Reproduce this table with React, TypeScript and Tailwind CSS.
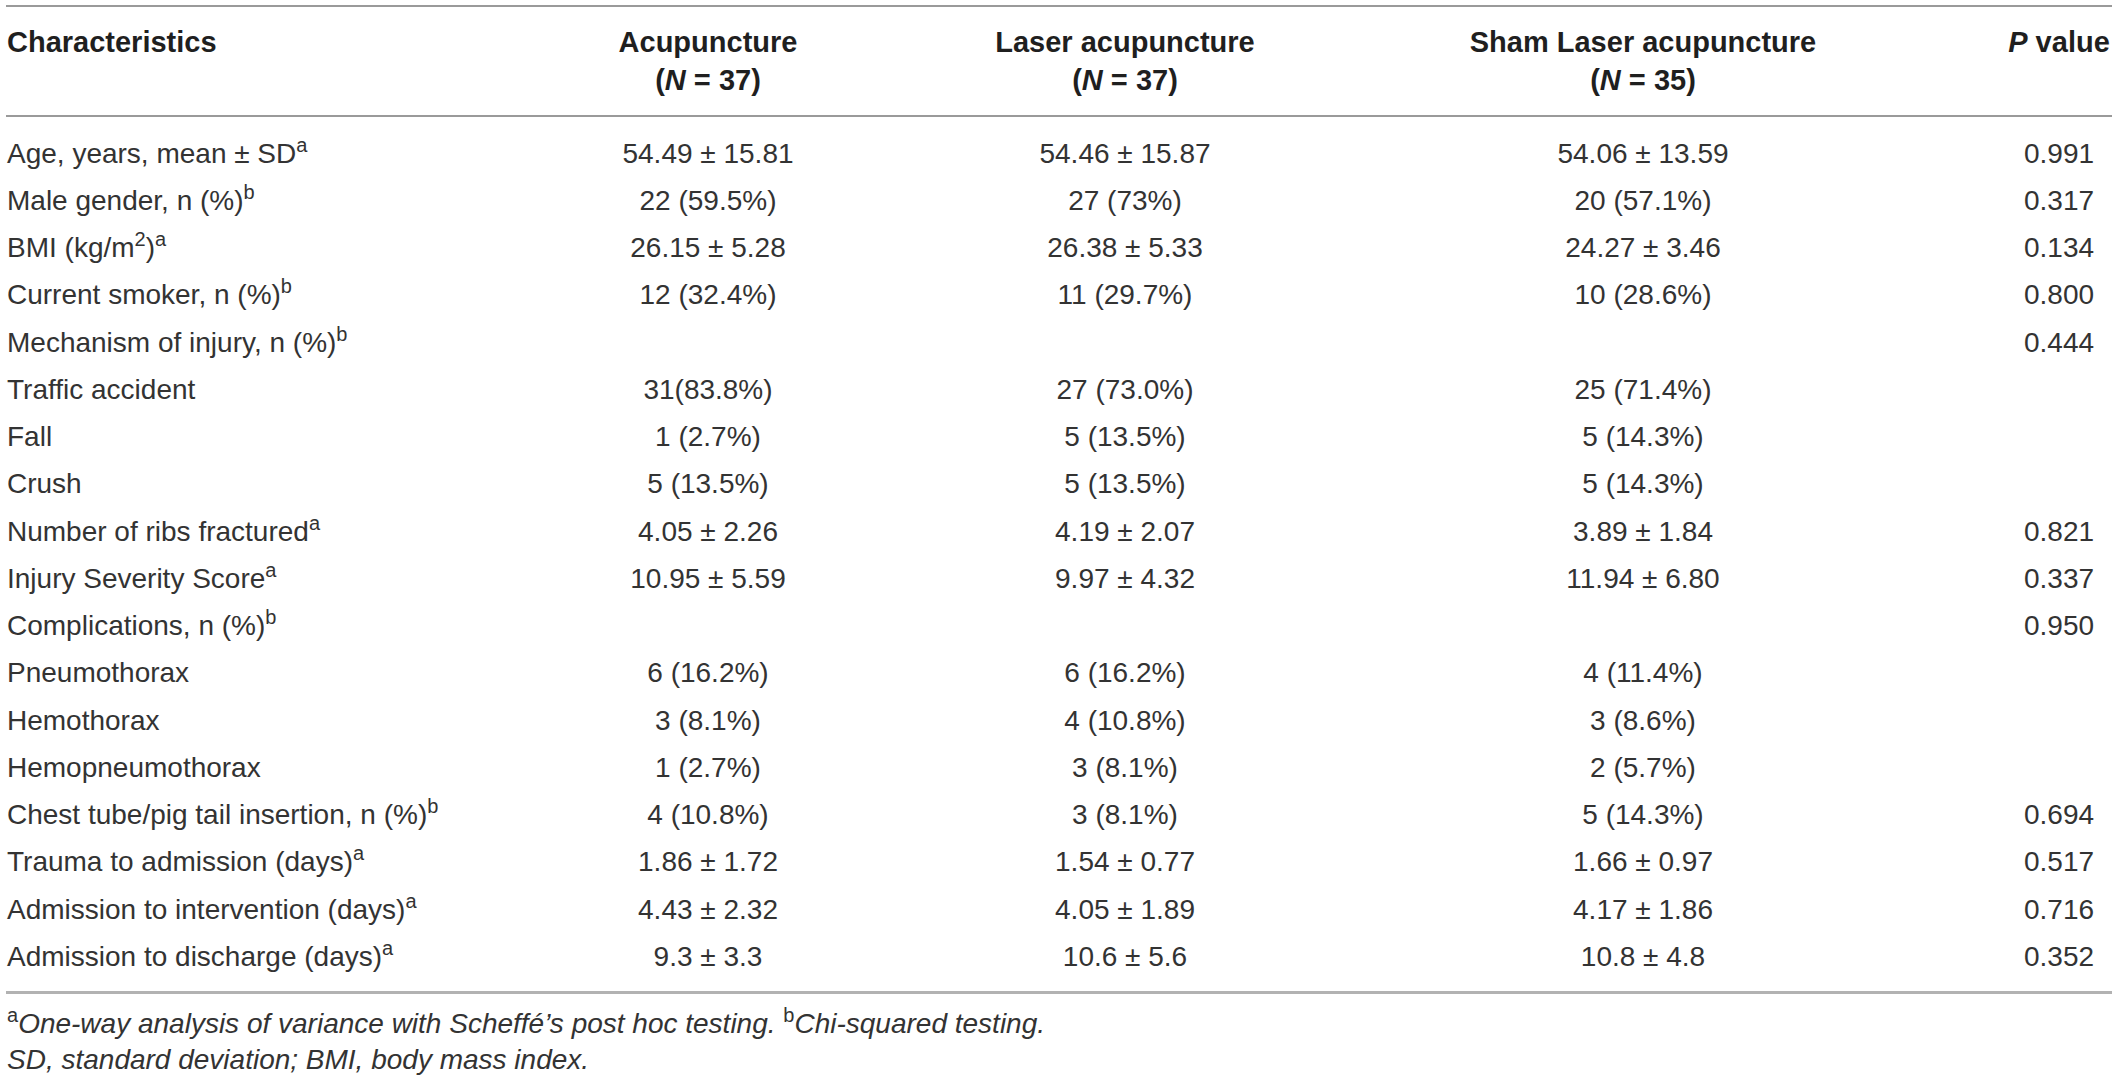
import type { ReactNode } from "react";

type Row = {
  label: ReactNode;
  values: [string, string, string];
  p: string;
};

const Sup = ({ children }: { children: ReactNode }) => (
  <sup className="text-[20px] top-[-0.55em]">{children}</sup>
);

const rows: Row[] = [
  { label: <>Age, years, mean ± SD<Sup>a</Sup></>, values: ["54.49 ± 15.81", "54.46 ± 15.87", "54.06 ± 13.59"], p: "0.991" },
  { label: <>Male gender, n (%)<Sup>b</Sup></>, values: ["22 (59.5%)", "27 (73%)", "20 (57.1%)"], p: "0.317" },
  { label: <>BMI (kg/m<Sup>2</Sup>)<Sup>a</Sup></>, values: ["26.15 ± 5.28", "26.38 ± 5.33", "24.27 ± 3.46"], p: "0.134" },
  { label: <>Current smoker, n (%)<Sup>b</Sup></>, values: ["12 (32.4%)", "11 (29.7%)", "10 (28.6%)"], p: "0.800" },
  { label: <>Mechanism of injury, n (%)<Sup>b</Sup></>, values: ["", "", ""], p: "0.444" },
  { label: "Traffic accident", values: ["31(83.8%)", "27 (73.0%)", "25 (71.4%)"], p: "" },
  { label: "Fall", values: ["1 (2.7%)", "5 (13.5%)", "5 (14.3%)"], p: "" },
  { label: "Crush", values: ["5 (13.5%)", "5 (13.5%)", "5 (14.3%)"], p: "" },
  { label: <>Number of ribs fractured<Sup>a</Sup></>, values: ["4.05 ± 2.26", "4.19 ± 2.07", "3.89 ± 1.84"], p: "0.821" },
  { label: <>Injury Severity Score<Sup>a</Sup></>, values: ["10.95 ± 5.59", "9.97 ± 4.32", "11.94 ± 6.80"], p: "0.337" },
  { label: <>Complications, n (%)<Sup>b</Sup></>, values: ["", "", ""], p: "0.950" },
  { label: "Pneumothorax", values: ["6 (16.2%)", "6 (16.2%)", "4 (11.4%)"], p: "" },
  { label: "Hemothorax", values: ["3 (8.1%)", "4 (10.8%)", "3 (8.6%)"], p: "" },
  { label: "Hemopneumothorax", values: ["1 (2.7%)", "3 (8.1%)", "2 (5.7%)"], p: "" },
  { label: <>Chest tube/pig tail insertion, n (%)<Sup>b</Sup></>, values: ["4 (10.8%)", "3 (8.1%)", "5 (14.3%)"], p: "0.694" },
  { label: <>Trauma to admission (days)<Sup>a</Sup></>, values: ["1.86 ± 1.72", "1.54 ± 0.77", "1.66 ± 0.97"], p: "0.517" },
  { label: <>Admission to intervention (days)<Sup>a</Sup></>, values: ["4.43 ± 2.32", "4.05 ± 1.89", "4.17 ± 1.86"], p: "0.716" },
  { label: <>Admission to discharge (days)<Sup>a</Sup></>, values: ["9.3 ± 3.3", "10.6 ± 5.6", "10.8 ± 4.8"], p: "0.352" },
];

const groups = [
  { name: "Acupuncture", n: "37" },
  { name: "Laser acupuncture", n: "37" },
  { name: "Sham Laser acupuncture", n: "35" },
];

const cols = "grid grid-cols-[440px_524px_310px_726px_106px]";

export default function App() {
  return (
    <div className="w-[2118px] h-[1083px] bg-white text-[#333333] font-['Liberation_Sans',Arial,sans-serif] overflow-hidden">
      <div className="ml-[6px] w-[2106px] pt-[5px]">
        <div className="h-[2px] bg-[#9a9a9a]" />

        {/* header */}
        <div className={`${cols} pt-[16px] pb-[16px] text-[29px] leading-[38px] font-bold text-[#1f1f1f]`}>
          <div className="pl-[1px]">Characteristics</div>
          {groups.map((g) => (
            <div key={g.name} className="text-center">
              <div>{g.name}</div>
              <div>
                (<span className="italic">N</span> = {g.n})
              </div>
            </div>
          ))}
          <div className="text-center">
            <span className="italic">P</span> value
          </div>
        </div>

        <div className="h-[2px] bg-[#9a9a9a]" />

        {/* body */}
        <div className="pt-[13px] pb-[10px] text-[28px]">
          {rows.map((r, i) => (
            <div key={i} className={`${cols} h-[47.25px] items-center leading-none`}>
              <div className="pl-[1px] whitespace-nowrap">{r.label}</div>
              {r.values.map((v, j) => (
                <div key={j} className="text-center whitespace-nowrap">
                  {v}
                </div>
              ))}
              <div className="text-center">{r.p}</div>
            </div>
          ))}
        </div>

        <div className="h-[3px] bg-[#b2b2b2]" />

        {/* notes */}
        <div className="pt-[12px] text-[28px] leading-[36px] pl-[1px]">
          <div>
            <Sup>a</Sup>
            <span className="italic">One-way analysis of variance with Scheffé’s post hoc testing. </span>
            <Sup>b</Sup>
            <span className="italic">Chi-squared testing.</span>
          </div>
          <div className="italic">SD, standard deviation; BMI, body mass index.</div>
        </div>
      </div>
    </div>
  );
}
